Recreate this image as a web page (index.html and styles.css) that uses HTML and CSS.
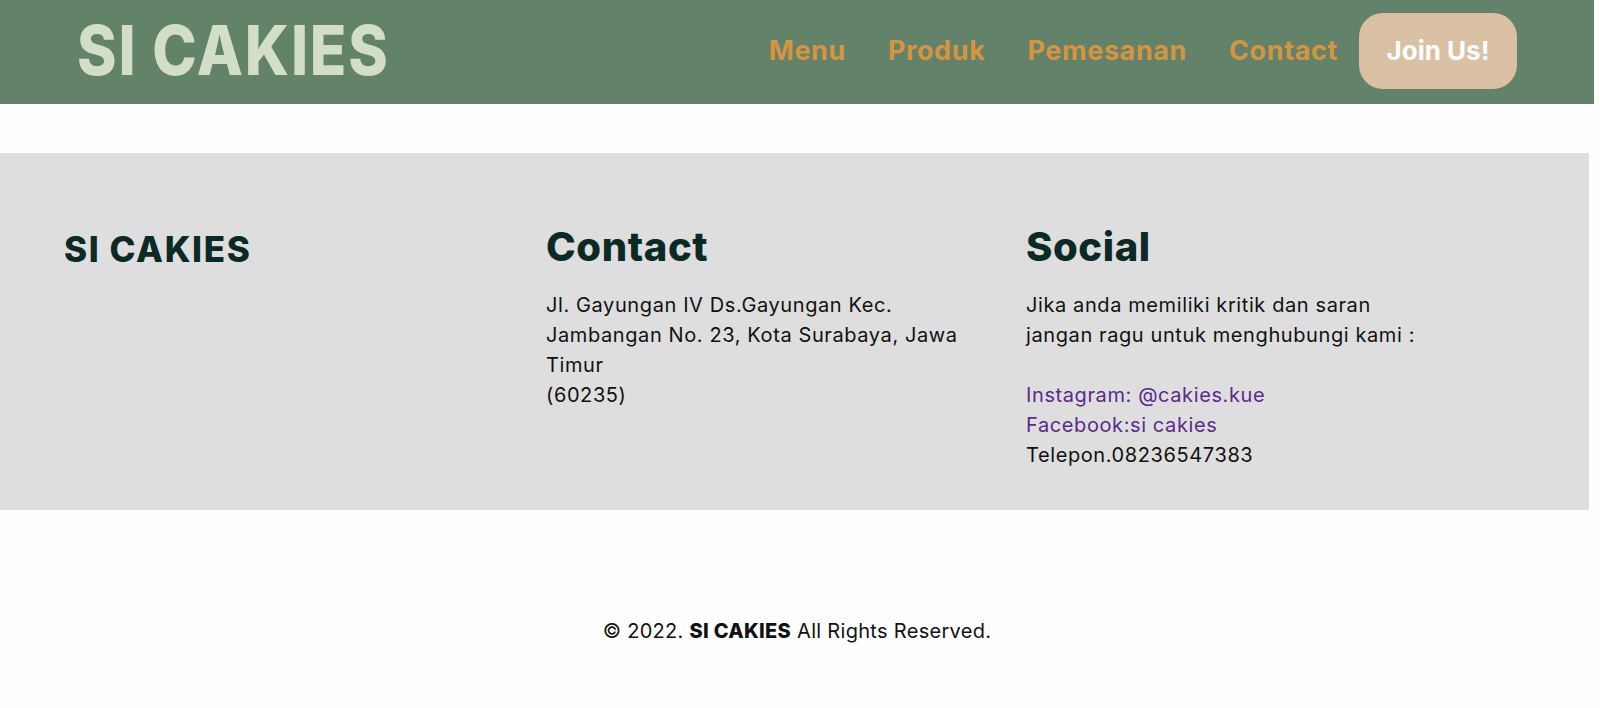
FILE: index.html
```html
<!DOCTYPE html>
<html lang="id">
<head>
<meta charset="utf-8">
<title>SI CAKIES</title>
<link rel="stylesheet" href="styles.css">
</head>
<body>
<div class="page">
  <header class="topbar">
    <div class="brand">SI CAKIES</div>
    <nav class="nav">
      <div class="nav-links">
        <a class="nav-link" href="#">Menu</a>
        <a class="nav-link" href="#">Produk</a>
        <a class="nav-link" href="#">Pemesanan</a>
        <a class="nav-link" href="#">Contact</a>
      </div>
      <a class="join" href="#">Join Us!</a>
    </nav>
  </header>

  <section class="info">
    <div class="col">
      <h3 class="col-brand">SI CAKIES</h3>
    </div>
    <div class="col">
      <h2 class="col-title">Contact</h2>
      <p class="col-text">Jl. Gayungan IV Ds.Gayungan Kec.<br>Jambangan No. 23, Kota Surabaya, Jawa<br>Timur<br>(60235)</p>
    </div>
    <div class="col">
      <h2 class="col-title">Social</h2>
      <p class="col-text">Jika anda memiliki kritik dan saran<br>jangan ragu untuk menghubungi kami :<br><br><a class="social-link" href="#">Instagram: @cakies.kue</a><br><a class="social-link" href="#">Facebook:si cakies</a><br>Telepon.08236547383</p>
    </div>
  </section>

  <footer class="copy">© 2022. <strong>SI CAKIES</strong> All Rights Reserved.</footer>
</div>
</body>
</html>
```

FILE: styles.css
```css
* { box-sizing: border-box; }

html, body {
  margin: 0;
  padding: 0;
  background: #fefefe;
}

body {
  font-family: Inter, "Open Sans", "Liberation Sans", sans-serif;
  color: #111;
  height: 708px;
  overflow: hidden;
}

.page {
  width: 1594px;
}

.topbar {
  height: 104px;
  background: #62826a;
  display: flex;
  align-items: center;
  justify-content: space-between;
  padding: 0 77px 0 77px;
}

.brand {
  font-size: 60px;
  font-weight: 800;
  color: #d3dec6;
  letter-spacing: 1.8px;
  transform: scaleY(1.15);
  transform-origin: center;
  line-height: 1;
  margin-top: -4px;
}

.nav {
  display: flex;
  align-items: center;
  gap: 21px;
  margin-top: -3px;
}

.nav-links {
  display: flex;
  align-items: center;
  gap: 42px;
}

.nav-link {
  font-size: 27px;
  font-weight: 700;
  letter-spacing: 0.6px;
  color: #d5953f;
  text-decoration: none;
}

.join {
  width: 158px;
  height: 76px;
  border-radius: 24px;
  background: #dbc1a4;
  color: #fff;
  font-size: 26px;
  font-weight: 700;
  text-decoration: none;
  display: flex;
  align-items: center;
  justify-content: center;
}

.info {
  margin-top: 49px;
  width: 1589px;
  background: #dedede;
  display: grid;
  grid-template-columns: 482px 480px 480px;
  padding: 70px 0 38px 64px;
  height: 357px;
}

.col-brand {
  margin: 2px 0 0;
  font-size: 35px;
  line-height: 48px;
  font-weight: 800;
  letter-spacing: 1.6px;
  color: #0c2a25;
}

.col-title {
  margin: 0 0 19px;
  font-size: 40px;
  line-height: 48px;
  font-weight: 800;
  letter-spacing: 0.6px;
  color: #0c2a25;
}

.col-text {
  margin: 0;
  font-size: 20px;
  line-height: 30px;
  letter-spacing: 0.6px;
  color: #111;
}

.social-link {
  color: #5a2a8e;
  text-decoration: none;
}

.copy {
  margin-top: 106px;
  text-align: center;
  font-size: 20px;
  line-height: 30px;
  letter-spacing: 0.3px;
  color: #111;
}

.copy strong {
  font-weight: 800;
}
```
